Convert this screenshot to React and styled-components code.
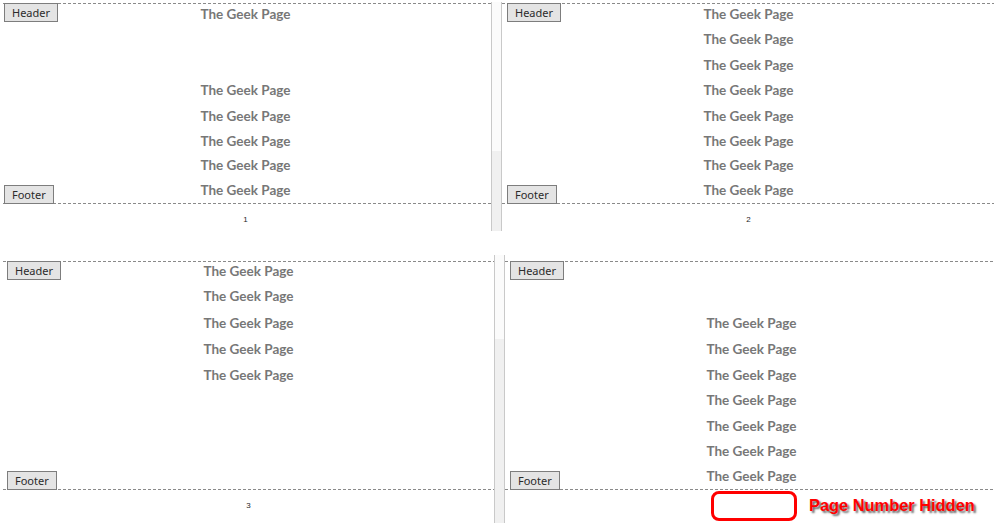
import React from "react";
import styled, { createGlobalStyle } from "styled-components";

const Global = createGlobalStyle`
  html, body { margin: 0; padding: 0; background: #ffffff; }
  body { width: 994px; height: 523px; overflow: hidden; font-family: "Liberation Sans", Arial, sans-serif; }
`;

const Sheet = styled.div`
  display: flex;
  flex-direction: column;
  gap: ${(p) => p.$gap}px;
  width: 994px;
  height: 523px;
`;

const Row = styled.div`
  display: flex;
  height: ${(p) => p.$h}px;
`;

const Page = styled.div`
  position: relative;
  display: flex;
  flex-direction: column;
  width: ${(p) => (p.$w ? `${p.$w}px` : "auto")};
  flex: ${(p) => (p.$w ? "none" : "1")};
  padding: ${(p) => p.$top}px 0 0 ${(p) => p.$left}px;
  box-sizing: border-box;
  overflow: hidden;
`;

const Rule = styled.div`
  height: 1px;
  flex: none;
  background: repeating-linear-gradient(to right, #8a8a8a 0 3px, transparent 3px 5px);
`;

const Body = styled.div`
  display: grid;
  grid-template-columns: 1fr auto 1fr;
  height: ${(p) => p.$h}px;
  padding: 0 ${(p) => p.$pr}px 0 ${(p) => p.$pl}px;
`;

const Tabs = styled.div`
  display: flex;
  flex-direction: column;
  justify-content: space-between;
  align-items: flex-start;
  position: relative;
  z-index: 1;
`;

const Tab = styled.div`
  height: 19px;
  box-sizing: border-box;
  padding: 0 7px;
  border: 1px solid #7d7d7d;
  background: #e4e4e4;
  color: #2b2b2b;
  font-family: "Noto Sans", "Segoe UI", sans-serif;
  font-size: 11px;
  line-height: 17px;
  margin-top: ${(p) => (p.$pos === "top" ? "-1px" : "0")};
  margin-bottom: ${(p) => (p.$pos === "bottom" ? "-1px" : "0")};
`;

const TextCol = styled.div`
  display: flex;
  flex-direction: column;
  align-items: center;
  margin-top: ${(p) => p.$mt}px;
`;

const Line = styled.div`
  height: ${(p) => p.$h}px;
  line-height: ${(p) => p.$h}px;
  font-family: Lato, "Open Sans", sans-serif;
  font-weight: 700;
  font-size: 13.5px;
  color: #777777;
  white-space: nowrap;
`;

const NumArea = styled.div`
  position: relative;
  padding: 11px ${(p) => p.$pr}px 0 ${(p) => p.$pl}px;
  display: flex;
  justify-content: center;
  font-family: "Liberation Sans", Arial, sans-serif;
  font-size: 8px;
  line-height: 10px;
  height: 10px;
  color: #1e1e1e;
`;

const Gutter = styled.div`
  flex: none;
  width: 11px;
  box-sizing: border-box;
  margin-top: ${(p) => p.$top}px;
  height: ${(p) => p.$h}px;
  border-left: 1px solid #c9c9c9;
  border-right: 1px solid #c9c9c9;
  background: linear-gradient(
    to bottom,
    #fbfbfb 0,
    #fbfbfb ${(p) => p.$split}px,
    #f0f0f0 ${(p) => p.$split}px,
    #f0f0f0 100%
  );
`;

const Callout = styled.div`
  position: absolute;
  left: ${(p) => p.$left}px;
  top: 1px;
  display: flex;
  align-items: center;
  gap: 12px;
`;

const RedBox = styled.div`
  width: 86px;
  height: 30px;
  box-sizing: border-box;
  border: 3px solid #ff0000;
  border-radius: 8px;
`;

const RedLabel = styled.div`
  font-family: "Liberation Sans", Arial, sans-serif;
  font-weight: 700;
  font-size: 16.4px;
  line-height: 20px;
  color: #ff0000;
  white-space: nowrap;
  margin-top: -3px;
  text-shadow: 2px 2px 2px rgba(0, 0, 0, 0.6);
`;

const TXT = "The Geek Page";
const H_TOP = [26, 25, 26, 25, 26, 24, 25, 25];
const H_BOT = [26, 25, 28, 25, 26, 25, 26, 25, 25];

function DocPage({ w, top, left, bodyH, pl, pr, heights, mt, lines, num, callout }) {
  return (
    <Page $w={w} $top={top} $left={left}>
      <Rule />
      <Body $h={bodyH} $pl={pl} $pr={pr}>
        <Tabs>
          <Tab $pos="top">Header</Tab>
          <Tab $pos="bottom">Footer</Tab>
        </Tabs>
        <TextCol $mt={mt}>
          {lines.map((on, i) => (
            <Line key={i} $h={heights[i]}>
              {on ? TXT : ""}
            </Line>
          ))}
        </TextCol>
        <div />
      </Body>
      <Rule />
      <NumArea $pl={pl} $pr={pr}>
        {num}
        {callout && (
          <Callout $left={callout}>
            <RedBox />
            <RedLabel>Page Number Hidden</RedLabel>
          </Callout>
        )}
      </NumArea>
    </Page>
  );
}

export default function App() {
  return (
    <>
      <Global />
      <Sheet $gap={23}>
        <Row $h={232}>
          <DocPage
            w={491}
            top={3}
            left={3}
            bodyH={199}
            pl={1}
            pr={4}
            heights={H_TOP}
            mt={-3}
            lines={[1, 0, 0, 1, 1, 1, 1, 1]}
            num="1"
          />
          <Gutter $top={2} $h={229} $split={149} />
          <DocPage
            top={3}
            left={0}
            bodyH={199}
            pl={5}
            pr={4}
            heights={H_TOP}
            mt={-3}
            lines={[1, 1, 1, 1, 1, 1, 1, 1]}
            num="2"
          />
        </Row>
        <Row $h={268}>
          <DocPage
            w={494}
            top={6}
            left={3}
            bodyH={227}
            pl={4}
            pr={4}
            heights={H_BOT}
            mt={-4}
            lines={[1, 1, 1, 1, 1]}
            num="3"
          />
          <Gutter $top={0} $h={268} $split={84} />
          <DocPage
            top={6}
            left={0}
            bodyH={227}
            pl={5}
            pr={1}
            heights={H_BOT}
            mt={-4}
            lines={[0, 0, 1, 1, 1, 1, 1, 1, 1]}
            num=""
            callout={206}
          />
        </Row>
      </Sheet>
    </>
  );
}
